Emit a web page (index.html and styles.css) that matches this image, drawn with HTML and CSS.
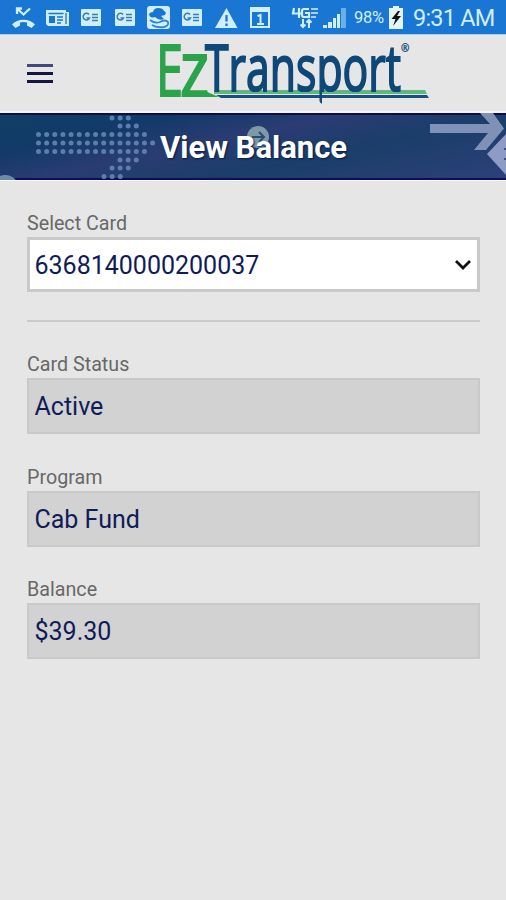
FILE: index.html
```html
<!DOCTYPE html>
<html lang="en">
<head>
<meta charset="utf-8">
<title>View Balance</title>
<link rel="stylesheet" href="styles.css">
</head>
<body>
<div class="status">
  <div class="notices">
    <svg width="24" height="24" viewBox="0 0 24 24"><path d="M0 19.500C5 13 18 13 23 19.500L19.500 23L15 20.500V17.500Q11.500 16.500 8 17.500V20.500L3.500 23Z" fill="#cfeeff"/><path d="M5 9V3.500H10M6 4.500L11.500 9.500L18 3.500" fill="none" stroke="#cfeeff" stroke-width="2.300"/></svg>
    <svg width="24" height="24" viewBox="0 0 24 24"><path d="M0 5H20V7H23V21H2L0 19Z" fill="#cfeeff"/><path d="M2.500 8.500H17.500M20 8V19" stroke="#1976ce" stroke-width="1.300"/><path d="M3 11H9V18H3Z" fill="#1976ce"/><path d="M11 12H17M11 15H17M11 18H15" stroke="#1976ce" stroke-width="1.300"/></svg>
    <svg width="24" height="24" viewBox="0 0 24 24"><rect x="1" y="4" width="20" height="17" rx="1" fill="#cfeeff"/><path d="M9 9.500A3.300 3.300 0 1 0 9.500 13H6.500M12 9.500H18M12 12.500H18M12 15.500H18" fill="none" stroke="#397fae" stroke-width="1.500"/></svg>
    <svg width="24" height="24" viewBox="0 0 24 24"><rect x="1" y="4" width="20" height="17" rx="1" fill="#cfeeff"/><path d="M9 9.500A3.300 3.300 0 1 0 9.500 13H6.500M12 9.500H18M12 12.500H18M12 15.500H18" fill="none" stroke="#397fae" stroke-width="1.500"/></svg>
    <svg width="24" height="24" viewBox="0 0 24 24"><rect x="-1" y="1" width="23" height="23" rx="3" fill="#cfeeff"/><path d="M1 9Q2 7 5 7Q6 3 10 3Q15 3 16 6Q19 7 17 10L13 11L16 14Q11 16 7 12Q2 14 1 9Z" fill="#1976ce"/><path d="M2 15Q7 19 12 17Q17 14 20 17Q21 21 16 22Q8 23 4 20" fill="none" stroke="#2f84cf" stroke-width="1.800"/></svg>
    <svg width="24" height="24" viewBox="0 0 24 24"><rect x="0" y="4" width="20" height="17" rx="1" fill="#cfeeff"/><path d="M8 9.500A3.300 3.300 0 1 0 8.500 13H5.500M11 9.500H17M11 12.500H17M11 15.500H17" fill="none" stroke="#397fae" stroke-width="1.500"/></svg>
    <svg width="24" height="24" viewBox="0 0 24 24"><path d="M10.500 3L21.500 23H-1Z" fill="#cfeeff"/><path d="M10.500 10V16.500M10.500 18.500V21" stroke="#1976ce" stroke-width="2.300"/></svg>
    <svg width="24" height="24" viewBox="0 0 24 24"><path d="M1 3H19V22H1Z" fill="none" stroke="#cfeeff" stroke-width="2"/><path d="M0 2H20V7H0Z" fill="#cfeeff"/><path d="M7.500 11L10.500 10V19M7 19H14" fill="none" stroke="#cfeeff" stroke-width="2"/></svg>
  </div>
  <div class="system">
    <svg width="28" height="24" viewBox="0 0 28 24"><path d="M2 3L1 8.500H9M7 3V13M17 4H12Q10 4 10 6V10Q10 12 12 12H17V8H13" fill="none" stroke="#cfeeff" stroke-width="2.200"/><path d="M19 4H26M19 8H26M19 12H24" stroke="#cfeeff" stroke-width="1.600"/><path d="M11 14V22M8.500 19.500L11 22L13.500 19.500M17 23V15M14.500 17.500L17 15L19.500 17.500" fill="none" stroke="#cfeeff" stroke-width="2"/></svg>
    <svg class="signal" width="24" height="24" viewBox="0 0 24 24"><path d="M0 20H4V23H0ZM5 17H9V23H5ZM10 13H13V23H10ZM14 9H17V23H14Z" fill="#cfeeff"/><path d="M18 3H23V23H18Z" fill="#69b0e6"/></svg>
    <span class="percent">98%</span>
    <svg class="battery" width="15" height="24" viewBox="0 0 15 24"><path d="M4 1H10V3H14V24H0V3H4Z" fill="#e3f4fa"/><path d="M9 6L2.500 14H6.500L4 21L12 11H8L11 6Z" fill="#111"/></svg>
    <span class="clock">9:31 AM</span>
  </div>
</div>
<header class="header">
  <div class="burger"><i></i><i></i><i></i></div>
  <svg class="logo" width="280" height="72" viewBox="154 38 280 72">
    <defs><clipPath id="tail"><path d="M200 38H434V92H322V104L316 98V92H200Z"/></clipPath></defs>
    <path d="M214 90H425L427 94H214Z" fill="#62b57c"/>
    <path d="M216 95H427L429 98H221Z" fill="#17527f"/>
    <path d="M184 91H205L219 97H184Z" fill="#2ba34a"/>
    <text class="ez" x="156" y="96" font-size="72" textLength="27" lengthAdjust="spacingAndGlyphs">E</text>
    <text class="ez" x="180" y="96" font-size="76" textLength="29" lengthAdjust="spacingAndGlyphs">z</text>
    <g clip-path="url(#tail)"><text class="transport" x="205" y="90.500" font-size="64" textLength="196" lengthAdjust="spacingAndGlyphs">Transport</text></g>
    <text class="reg" x="401" y="52" font-size="10">®</text>
  </svg>
</header>
<section class="banner">
  <svg class="art" width="506" height="67" viewBox="0 113 506 67">
    <g fill="none" stroke="#5c7eab" stroke-width="5" stroke-linecap="round">
      <path d="M38.500 134.500H146M38.500 143H154M38.500 151.500H146" stroke-dasharray="0 8.150"/>
      <path d="M112 118H130M120 126H138M120 160H138M112 168H130M104 176.500H122" stroke-dasharray="0 8.150"/>
    </g>
    <path d="M430 124H490L480 113H493L504 128.500L486 150H474L488 133H430Z" fill="#7f91b6"/>
    <path d="M506 134L487 154L506 175Z" fill="#8e9bc4"/>
    <path d="M504 149H506M504 159H506" stroke="#3f4e80" stroke-width="2"/>
    <circle cx="5" cy="189" r="14" fill="#6b8ba7"/>
    <circle cx="258" cy="137" r="11" fill="#7e9aa8"/>
    <path d="M252 137H264M259 132L264 137L259 142" fill="none" stroke="#294d70" stroke-width="2"/>
  </svg>
  <h1>View Balance</h1>
</section>
<main class="form">
  <label>Select Card</label>
  <div class="field select"><span>6368140000200037</span>
    <svg width="18" height="12" viewBox="0 0 18 12"><path d="M2 2L9 9L16 2" fill="none" stroke="#111" stroke-width="2.800"/></svg>
  </div>
  <hr>
  <label>Card Status</label>
  <div class="field">Active</div>
  <label>Program</label>
  <div class="field">Cab Fund</div>
  <label>Balance</label>
  <div class="field">$39.30</div>
</main>
</body>
</html>
```

FILE: styles.css
```css
* { box-sizing: border-box; }
body {
  margin: 0;
  height: 900px;
  overflow: hidden;
  background: #e6e6e6;
  font-family: Roboto, sans-serif;
}
svg { display: block; flex: none; overflow: visible; }
.status {
  height: 34px;
  padding: 5px 12px 0;
  display: flex;
  justify-content: space-between;
  background: #1976d2;
  color: #cfeeff;
}
.notices { display: flex; gap: 10px; }
.system { display: flex; height: 24px; align-items: center; white-space: nowrap; }
.signal { margin-left: 3px; }
.percent { margin-left: 7px; width: 35px; font-size: 16.5px; letter-spacing: -0.3px; line-height: 26px; padding-top: 2px; }
.battery { margin-right: 9px; }
.clock { width: 81px; font-size: 23.5px; letter-spacing: -0.8px; line-height: 26px; padding-top: 2px; }
.header {
  height: 79px;
  padding: 4px 0 0 27px;
  display: flex;
  border-top: 1px solid #a5cdee;
  border-bottom: 2px solid #f6f6f6;
}
.burger {
  width: 26px;
  margin: 25px 101px 0 0;
  display: flex;
  flex-direction: column;
  gap: 5px;
}
.burger i { height: 3px; background: #15153f; }
.burger i:first-child { background: #44477c; }
.logo { margin-top: -1px; }
.logo text { font-family: "Open Sans", sans-serif; }
.ez { fill: #2ba34a; stroke: #2ba34a; stroke-width: 2px; }
.transport { fill: #0d4878; stroke: #0d4878; stroke-width: 2px; }
.reg { fill: #0d4878; stroke: #0d4878; stroke-width: 0.3px; }
.banner {
  position: relative;
  height: 67px;
  border: solid #0c0c57;
  border-width: 2px 0;
  background: linear-gradient(168deg, #103f65 0%, #123a69 22%, #2a3c73 42%, #1a3e69 64%, #2d4079 100%);
  box-shadow: 0 1px 0 #f8f8f8;
}
.art { position: absolute; left: 0; top: -2px; overflow: hidden; }
h1 {
  position: relative;
  margin: 0;
  padding: 1px 0 0 1px;
  text-align: center;
  color: #fff;
  font-size: 31px;
  font-weight: 700;
  line-height: 63px;
  text-shadow: 1px 1px 2px #071b45;
}
.form { padding: 30px 26px 0 27px; }
label {
  display: block;
  height: 27px;
  line-height: 27px;
  color: #686868;
  font-size: 19.7px;
}
.field {
  height: 56px;
  margin-bottom: 29.500px;
  padding: 0 5.500px;
  border: 2px solid #c9c9c9;
  background: #d2d2d2;
  color: #101c58;
  font-size: 25px;
  line-height: 53px;
}
.select {
  display: flex;
  align-items: center;
  justify-content: space-between;
  height: 55px;
  padding: 0 5px 0 4.5px;
  margin-bottom: 28px;
  border: 3px solid #c9c9c9;
  background: #fff;
}
.select span { padding-top: 2px; }
hr { height: 2px; margin: 0 0 29px; border: 0; background: #cbcbcb; }
```
